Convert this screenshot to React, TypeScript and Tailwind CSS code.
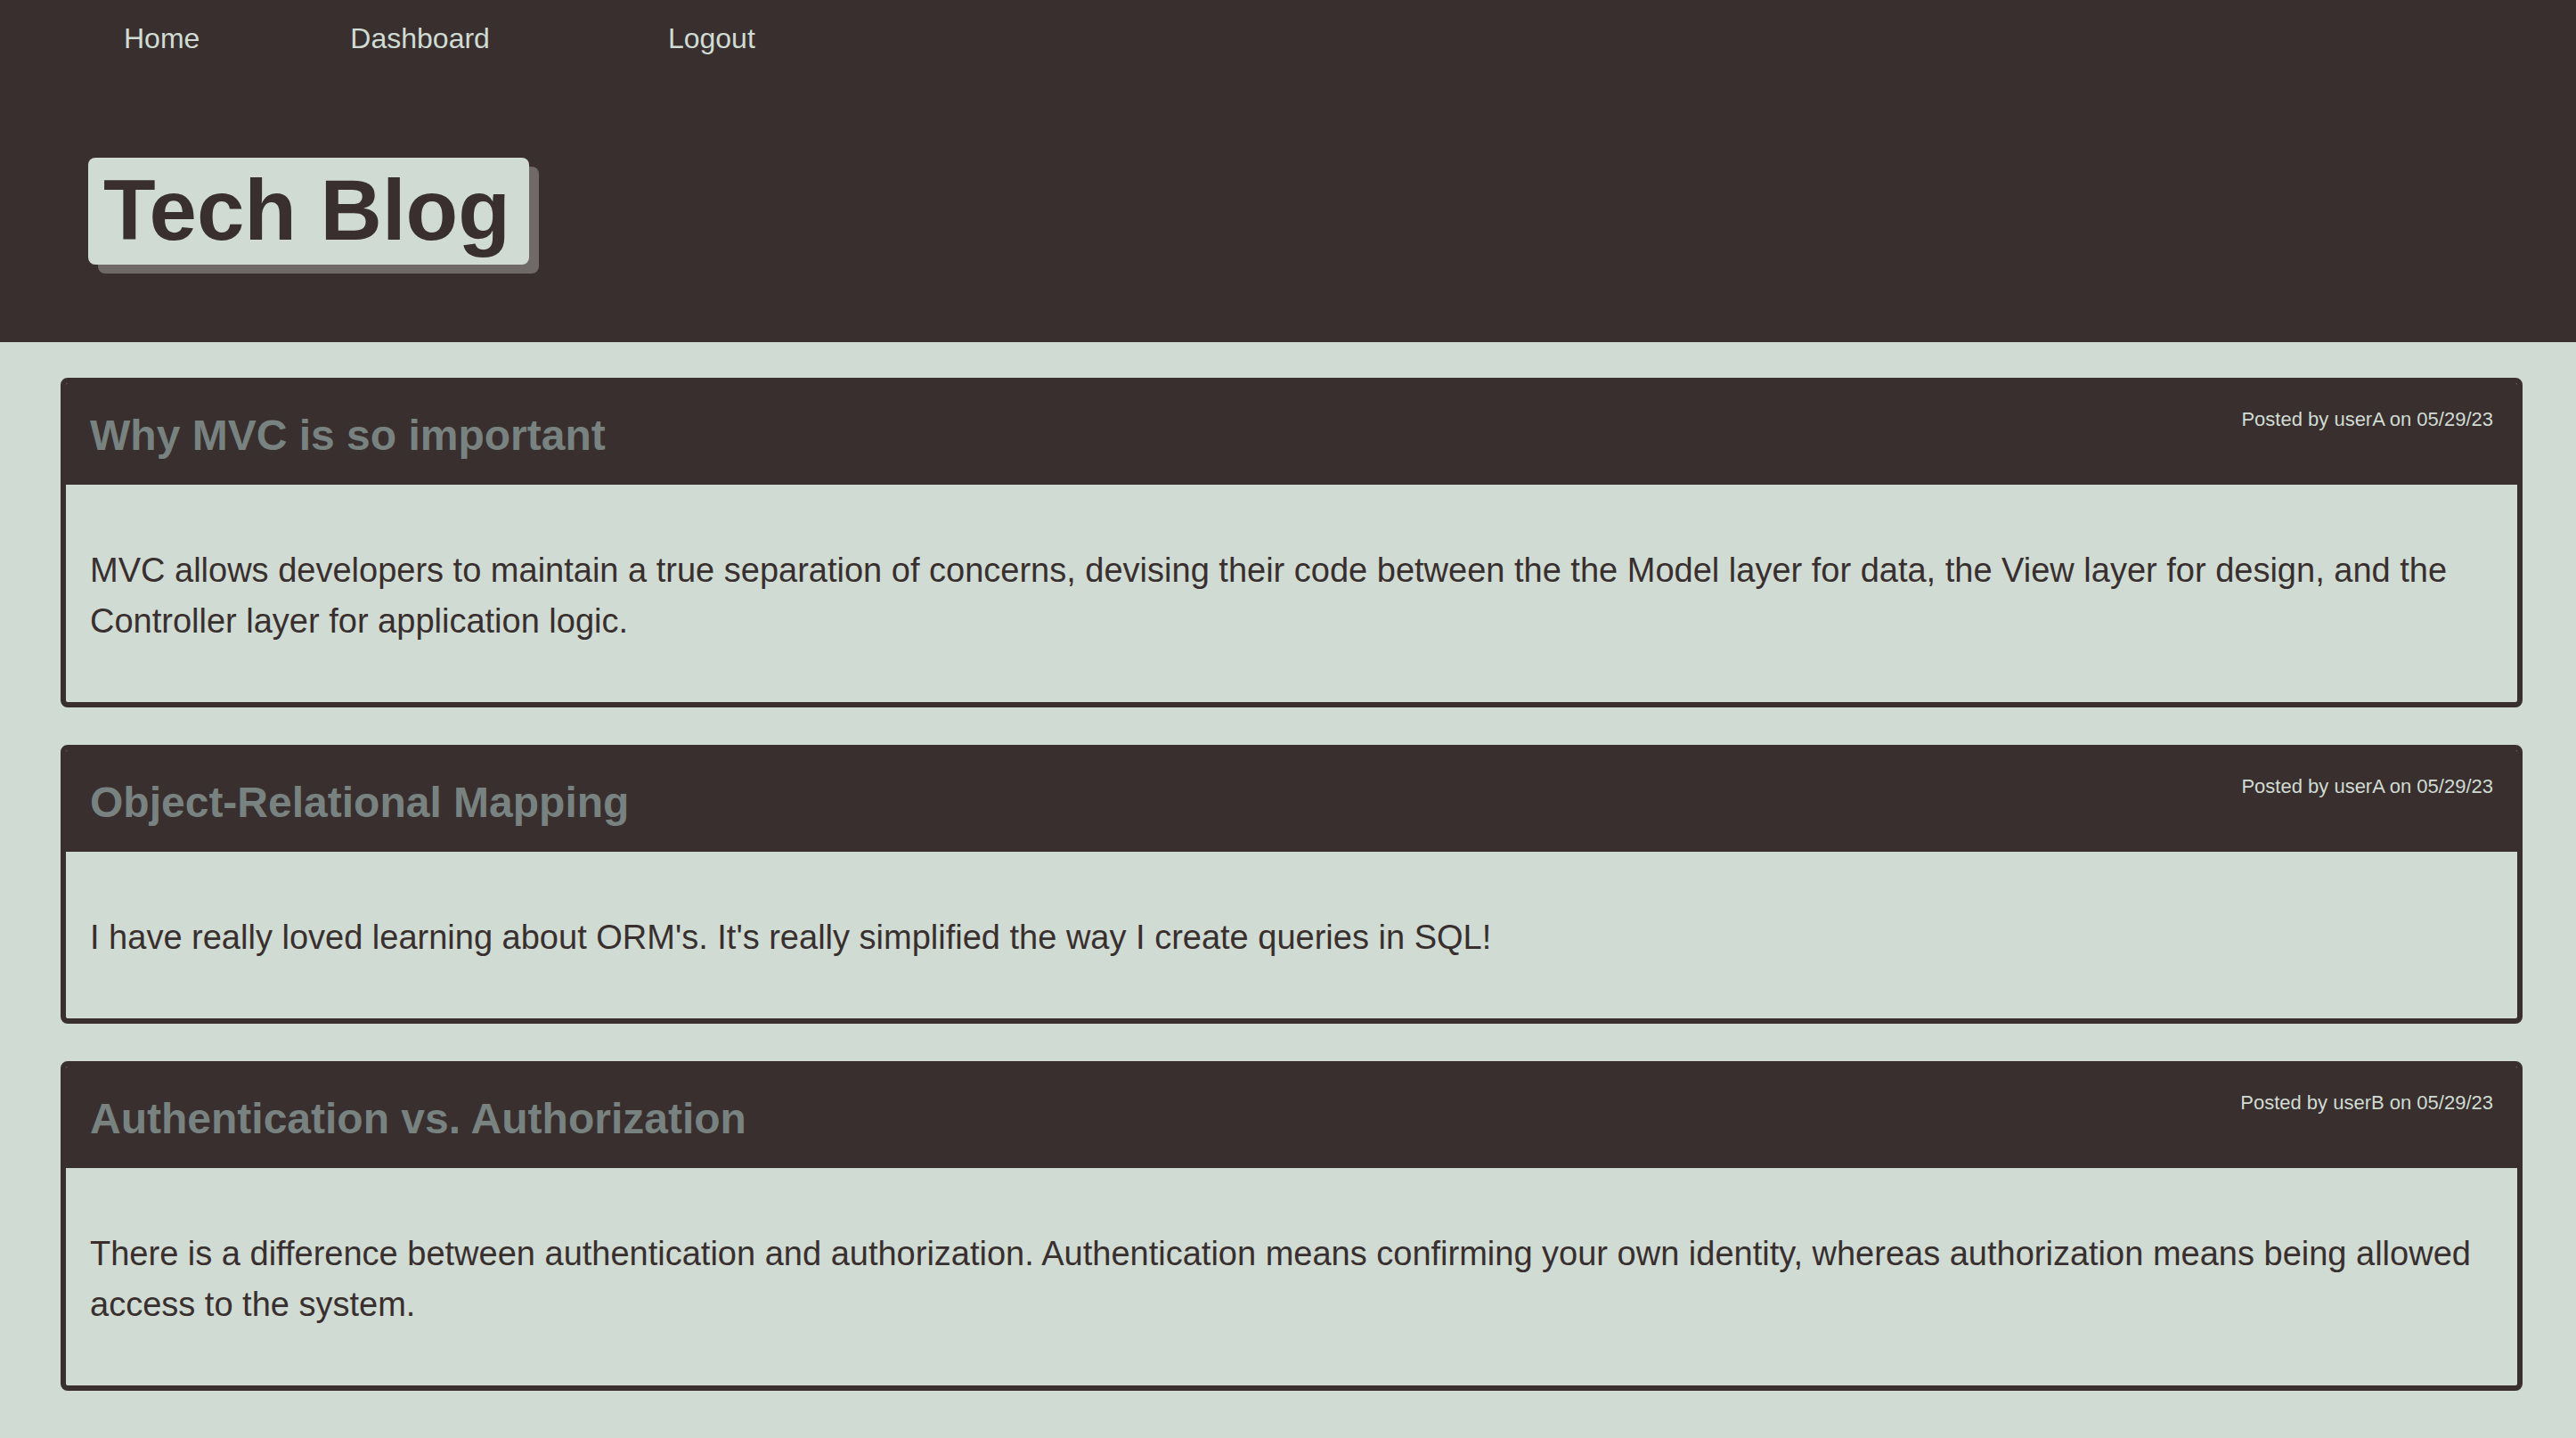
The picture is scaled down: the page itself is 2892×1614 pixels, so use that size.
import React from "react";

type Post = {
  id: number;
  title: string;
  author: string;
  date: string;
  body: string;
};

const posts: Post[] = [
  {
    id: 1,
    title: "Why MVC is so important",
    author: "userA",
    date: "05/29/23",
    body: "MVC allows developers to maintain a true separation of concerns, devising their code between the the Model layer for data, the View layer for design, and the Controller layer for application logic.",
  },
  {
    id: 2,
    title: "Object-Relational Mapping",
    author: "userA",
    date: "05/29/23",
    body: "I have really loved learning about ORM's. It's really simplified the way I create queries in SQL!",
  },
  {
    id: 3,
    title: "Authentication vs. Authorization",
    author: "userB",
    date: "05/29/23",
    body: "There is a difference between authentication and authorization. Authentication means confirming your own identity, whereas authorization means being allowed access to the system.",
  },
];

function PostCard({ post }: { post: Post }) {
  return (
    <article className="overflow-hidden rounded-lg border-[6px] border-[#382f2e]">
      <header className="flex h-[114px] items-start justify-between bg-[#382f2e] px-[27px] pt-[24px]">
        <h2 className="-mt-[1px] text-[48px] font-bold leading-normal text-[#788280]">{post.title}</h2>
        <p className="text-[22px] leading-normal text-[#d0dbd3]">
          Posted by {post.author} on {post.date}
        </p>
      </header>
      <div className="px-[27px] pb-[62px] pt-[68px]">
        <p className="text-[38px] leading-[57px] text-[#382f2e]">{post.body}</p>
      </div>
    </article>
  );
}

export default function App() {
  return (
    <div className="min-h-screen bg-[#d0dbd3] font-['Liberation_Sans',Arial,sans-serif]">
      <header className="h-[384px] bg-[#382f2e] pt-[19px]">
        <nav className="flex text-[32px] leading-normal text-[#d0dbd3]">
          <a href="#" className="ml-[139px]">Home</a>
          <a href="#" className="ml-[169px]">Dashboard</a>
          <a href="#" className="ml-[200px]">Logout</a>
        </nav>
        <div className="ml-[99px] mt-[110px] flex">
          <h1 className="rounded-lg bg-[#d0dbd3] pb-[13px] pl-[17px] pr-[21px] pt-[11px] text-[96px] font-bold leading-none text-[#382f2e] shadow-[11px_10px_0_#6f6a68]">
            Tech Blog
          </h1>
        </div>
      </header>

      <main className="flex flex-col gap-[42px] pb-[56px] pl-[68px] pr-[60px] pt-[40px]">
        {posts.map((post) => (
          <PostCard key={post.id} post={post} />
        ))}
      </main>
    </div>
  );
}
